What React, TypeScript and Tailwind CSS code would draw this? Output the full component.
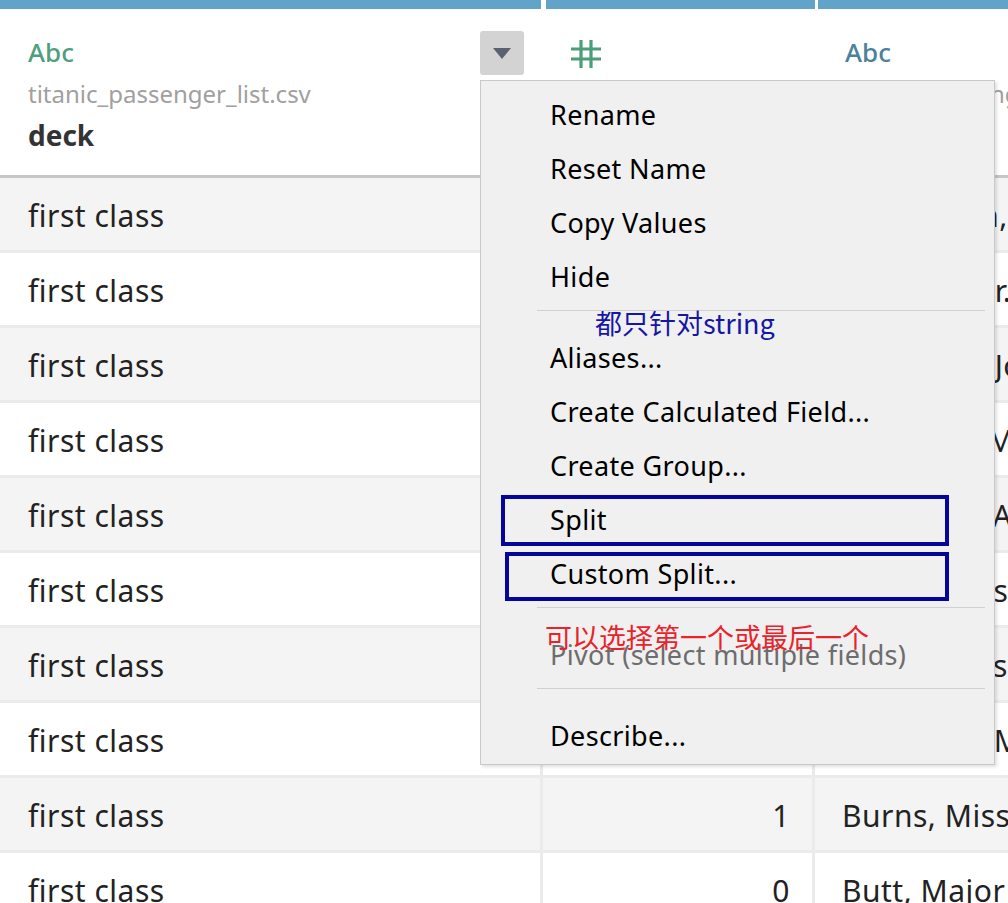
import React from "react";

type Row = {
  deck: string;
  survived: number;
  name: string;
};

const rows: Row[] = [
  { deck: "first class", survived: 1, name: "Bowerman, Miss Elsie Edith" },
  { deck: "first class", survived: 0, name: "Bradley, Mr. George" },
  { deck: "first class", survived: 0, name: "Brady, Mr. John Bertram" },
  { deck: "first class", survived: 0, name: "Brandeis, Mr. Emil" },
  { deck: "first class", survived: 1, name: "Blank, Mr. Albert" },
  { deck: "first class", survived: 1, name: "Bowen, Miss Grace Scott" },
  { deck: "first class", survived: 1, name: "Brown, Mrs. James Joseph" },
  { deck: "first class", survived: 0, name: "Blackwell, Mr. Stephen Weart" },
  { deck: "first class", survived: 1, name: "Burns, Miss Elizabeth" },
  { deck: "first class", survived: 0, name: "Butt, Major Archibald" },
];

const menuFont = { fontFamily: '"Noto Sans", "Open Sans", sans-serif' };
const cellFont = { fontFamily: '"Noto Sans", "Liberation Sans", sans-serif' };
const cjkFont = { fontFamily: '"Noto Sans CJK SC", "Noto Sans", sans-serif' };

function MenuItem({ label, disabled }: { label: string; disabled?: boolean }) {
  return (
    <div className={`h-[54px] flex items-center pl-[69px] text-[27px] tracking-[0.35px] ${disabled ? "text-[#6d6d6d]" : "text-black"}`}>
      {label}
    </div>
  );
}

function Separator() {
  return (
    <div className="pt-[6px] pb-[20px] pl-[56px] pr-[9px]">
      <div className="h-px bg-[#d0d0d0]" />
    </div>
  );
}

function HashIcon() {
  return (
    <svg width="32" height="30" viewBox="0 0 32 30" className="text-[#4b9e78]">
      <path d="M11 1v28M21 1v28M1 10h30M1 20h30" stroke="currentColor" strokeWidth="3.2" fill="none" />
    </svg>
  );
}

export default function App() {
  return (
    <div className="relative w-[1008px] h-[903px] overflow-hidden bg-white" style={cellFont}>
      {/* header */}
      <div className="flex h-[178px]">
        <div className="w-[541px] flex flex-col border-b-[3px] border-[#c6c6c6]">
          <div className="h-[9px] bg-[#62a4c9]" />
          <div className="relative flex-1 pl-[28px]">
            <div className="pt-[28px] text-[26px] leading-[30px] font-medium text-[#4f9f7f]">Abc</div>
            <div className="mt-[12px] text-[24px] leading-[30px] text-[#a0a0a0]">titanic_passenger_list.csv</div>
            <div className="mt-[9px] text-[28px] leading-[34px] font-bold text-[#333333]">deck</div>
            <div className="absolute left-[480px] top-[22px] w-[44px] h-[44px] rounded-[3px] bg-[#d3d3d3] flex items-center justify-center">
              <svg width="18" height="11" viewBox="0 0 18 11">
                <path d="M0 0h18L9 11z" fill="#5a6271" />
              </svg>
            </div>
          </div>
        </div>
        <div className="w-[5px] bg-white" />
        <div className="w-[269px] flex flex-col border-b-[3px] border-[#c6c6c6]">
          <div className="h-[9px] bg-[#62a4c9]" />
          <div className="pl-[24px] pt-[30px]">
            <HashIcon />
          </div>
        </div>
        <div className="w-[3px] bg-white" />
        <div className="flex-1 flex flex-col border-b-[3px] border-[#c6c6c6] overflow-hidden">
          <div className="h-[9px] bg-[#62a4c9]" />
          <div className="pl-[27px] whitespace-nowrap">
            <div className="pt-[28px] text-[26px] leading-[30px] font-medium text-[#4a819c]">Abc</div>
            <div className="mt-[12px] text-[24px] leading-[30px] text-[#a0a0a0]">titanic_passenger_list.csv</div>
            <div className="mt-[9px] text-[28px] leading-[34px] font-bold text-[#333333]">name</div>
          </div>
        </div>
      </div>

      {/* body rows */}
      <div className="flex flex-col">
        {rows.map((r, i) => (
          <div
            key={i}
            className={`flex h-[75px] border-b-[3px] border-[#ebebeb] text-[30px] tracking-[0.5px] text-[#222] ${i % 2 === 0 ? "bg-[#f4f4f4]" : "bg-white"}`}
          >
            <div className="w-[543px] pl-[28px] pt-[3px] flex items-center border-r-[3px] border-[#ebebeb] whitespace-nowrap">{r.deck}</div>
            <div className="w-[272px] pr-[22px] pt-[3px] flex items-center justify-end border-r-[3px] border-[#ebebeb]">{r.survived}</div>
            <div className="flex-1 pl-[27px] pt-[3px] flex items-center whitespace-nowrap overflow-hidden">{r.name}</div>
          </div>
        ))}
      </div>

      {/* context menu */}
      <div
        className="absolute left-[480px] top-[80px] w-[515px] border border-[#c9c9c9] bg-[#f0f0f0] pt-[7px] pb-px shadow-[2px_2px_3px_rgba(0,0,0,0.12)]"
        style={menuFont}
      >
        <MenuItem label="Rename" />
        <MenuItem label="Reset Name" />
        <MenuItem label="Copy Values" />
        <MenuItem label="Hide" />
        <Separator />
        <MenuItem label="Aliases..." />
        <MenuItem label="Create Calculated Field..." />
        <MenuItem label="Create Group..." />
        <MenuItem label="Split" />
        <MenuItem label="Custom Split..." />
        <Separator />
        <MenuItem label="Pivot (select multiple fields)" disabled />
        <Separator />
        <MenuItem label="Describe..." />

        {/* annotations */}
        <div className="absolute left-[114px] top-[226px] text-[27px] leading-[32px] text-[#1616a6] whitespace-nowrap" style={cjkFont}>
          都只针对string
        </div>
        <div className="absolute left-[20px] top-[414px] w-[448px] h-[51px] border-[4px] border-[#05059a]" />
        <div className="absolute left-[24px] top-[471px] w-[444px] h-[49px] border-[4px] border-[#05059a]" />
        <div className="absolute left-[64px] top-[540px] text-[27px] leading-[32px] text-[#e8232b] whitespace-nowrap" style={cjkFont}>
          可以选择第一个或最后一个
        </div>
      </div>
    </div>
  );
}
